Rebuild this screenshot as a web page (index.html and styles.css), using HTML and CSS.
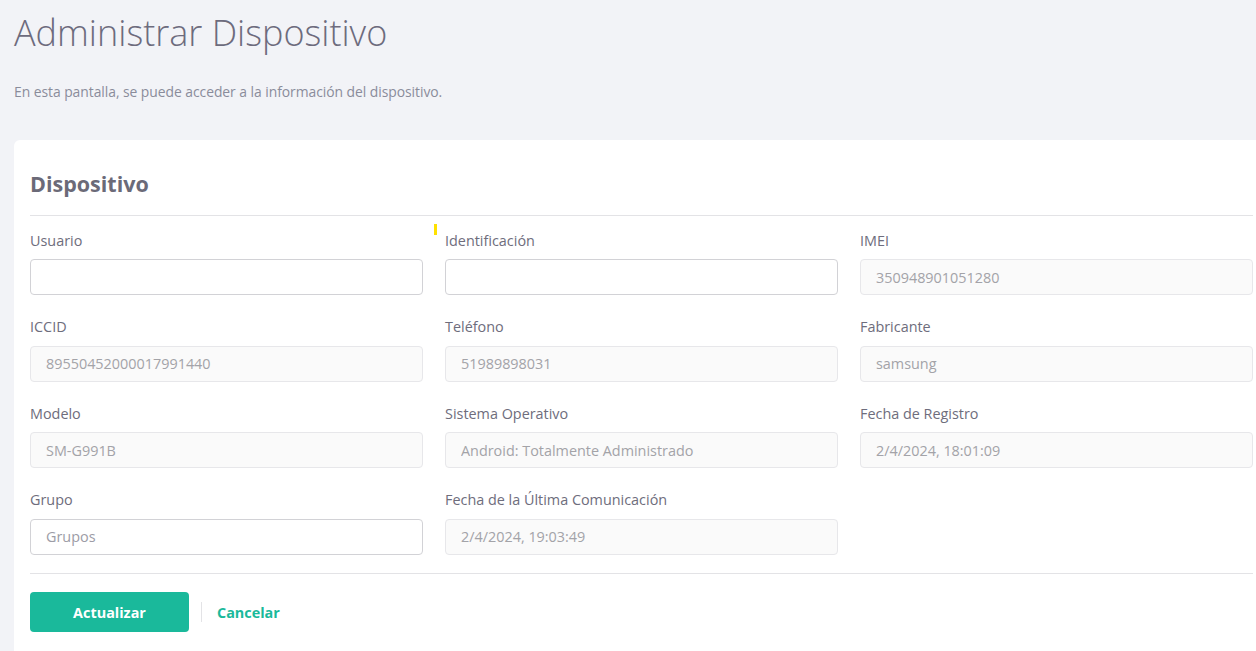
FILE: index.html
```html
<!DOCTYPE html>
<html lang="es">
<head>
<meta charset="utf-8">
<title>Administrar Dispositivo</title>
<link rel="stylesheet" href="styles.css">
</head>
<body>
<div class="page">
  <h1 class="page-title">Administrar Dispositivo</h1>
  <p class="page-subtitle">En esta pantalla, se puede acceder a la información del dispositivo.</p>

  <section class="card">
    <h2 class="card-title">Dispositivo</h2>
    <div class="divider"></div>

    <div class="form-grid">
      <div class="field">
        <label class="field-label">Usuario</label>
        <input class="input" type="text" value="">
      </div>
      <div class="field">
        <span class="marker"></span>
        <label class="field-label">Identificación</label>
        <input class="input" type="text" value="">
      </div>
      <div class="field">
        <label class="field-label">IMEI</label>
        <input class="input" type="text" value="350948901051280" disabled>
      </div>

      <div class="field">
        <label class="field-label">ICCID</label>
        <input class="input" type="text" value="89550452000017991440" disabled>
      </div>
      <div class="field">
        <label class="field-label">Teléfono</label>
        <input class="input" type="text" value="51989898031" disabled>
      </div>
      <div class="field">
        <label class="field-label">Fabricante</label>
        <input class="input" type="text" value="samsung" disabled>
      </div>

      <div class="field">
        <label class="field-label">Modelo</label>
        <input class="input" type="text" value="SM-G991B" disabled>
      </div>
      <div class="field">
        <label class="field-label">Sistema Operativo</label>
        <input class="input" type="text" value="Android: Totalmente Administrado" disabled>
      </div>
      <div class="field">
        <label class="field-label">Fecha de Registro</label>
        <input class="input" type="text" value="2/4/2024, 18:01:09" disabled>
      </div>

      <div class="field">
        <label class="field-label">Grupo</label>
        <input class="input" type="text" placeholder="Grupos">
      </div>
      <div class="field">
        <label class="field-label">Fecha de la Última Comunicación</label>
        <input class="input" type="text" value="2/4/2024, 19:03:49" disabled>
      </div>
    </div>

    <div class="divider divider-bottom"></div>

    <div class="actions">
      <button class="btn-primary" type="button">Actualizar</button>
      <span class="actions-sep"></span>
      <a class="btn-link" href="#">Cancelar</a>
    </div>
  </section>
</div>
</body>
</html>
```

FILE: styles.css
```css
html, body {
  margin: 0;
  padding: 0;
  overflow: hidden;
  background: #f2f3f7;
}

body {
  font-family: "Open Sans", "Noto Sans", sans-serif;
  color: #6b6a7a;
}

.page {
  padding: 11px 0 0 14px;
  width: 1255px;
}

.page-title {
  margin: 0;
  font-size: 36px;
  line-height: 44px;
  font-weight: 300;
  color: #6d6b7d;
}

.page-subtitle {
  margin: 27px 0 0;
  font-size: 13.9px;
  line-height: 20px;
  letter-spacing: -0.05px;
  color: #8a8c9b;
}

.card {
  margin-top: 38px;
  background: #ffffff;
  border-radius: 6px;
  padding: 28.5px 16px 40px;
}

.card-title {
  margin: 0;
  font-size: 21.5px;
  line-height: 30px;
  font-weight: 700;
  color: #6b6a78;
}

.divider {
  height: 1px;
  background: #e3e3e6;
  margin-top: 16.5px;
}

.form-grid {
  display: grid;
  grid-template-columns: repeat(3, 1fr);
  column-gap: 22px;
  row-gap: 22px;
  margin-top: 14.5px;
}

.field {
  position: relative;
  display: flex;
  flex-direction: column;
}

.field-label {
  font-size: 14.4px;
  line-height: 20px;
  color: #6e6d7c;
  margin-bottom: 8.5px;
}

.marker {
  position: absolute;
  left: -11px;
  top: -7px;
  width: 3px;
  height: 11px;
  background: #ffe100;
}

.input {
  box-sizing: border-box;
  height: 36px;
  width: 100%;
  margin: 0;
  padding: 0 15px;
  border: 1px solid #d2d2d6;
  border-radius: 4px;
  background: #ffffff;
  font-family: "Open Sans", "Noto Sans", sans-serif;
  font-size: 14.4px;
  color: #666;
  outline: none;
}

.input::placeholder {
  color: #9c9ca6;
  opacity: 1;
}

.input:disabled {
  background: #fafafa;
  border-color: #e7e7ea;
  color: #a3a3a8;
  -webkit-text-fill-color: #a3a3a8;
  opacity: 1;
}

.divider-bottom {
  margin-top: 18px;
}

.actions {
  display: flex;
  align-items: center;
  margin-top: 18.5px;
}

.btn-primary {
  width: 159px;
  height: 40px;
  border: none;
  border-radius: 4px;
  background: #1ab99b;
  color: #ffffff;
  font-family: "Open Sans", "Noto Sans", sans-serif;
  font-size: 14.4px;
  font-weight: 700;
  cursor: pointer;
}

.actions-sep {
  width: 1px;
  height: 20px;
  background: #e3e3e6;
  margin: 0 15px 0 12px;
}

.btn-link {
  font-size: 14.4px;
  font-weight: 700;
  color: #1ab99b;
  text-decoration: none;
}
```
